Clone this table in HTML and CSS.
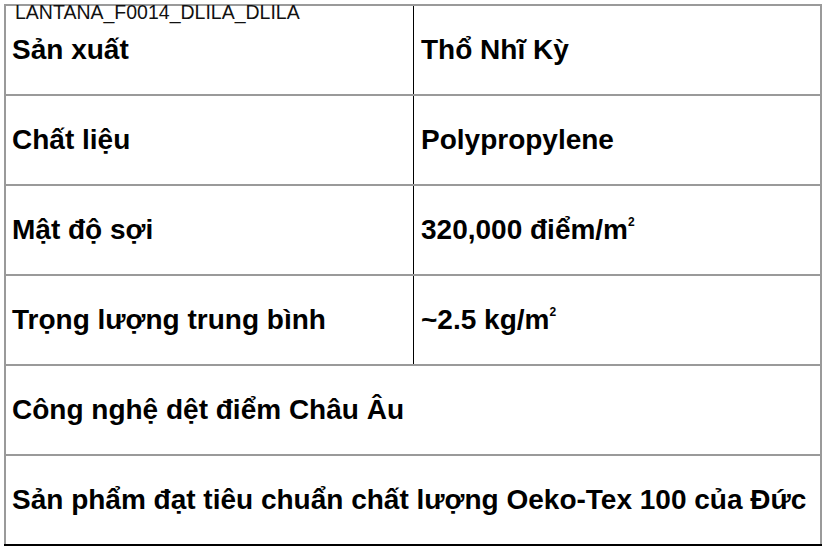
FILE: index.html
```html
<!DOCTYPE html>
<html lang="vi">
<head>
<meta charset="utf-8">
<link rel="stylesheet" href="styles.css">
</head>
<body>
<div class="wrap">
  <div class="caption">LANTANA_F0014_DLILA_DLILA</div>
  <table class="spec">
    <tr><td class="k">Sản xuất</td><td class="v">Thổ Nhĩ Kỳ</td></tr>
    <tr><td class="k">Chất liệu</td><td class="v">Polypropylene</td></tr>
    <tr><td class="k">Mật độ sợi</td><td class="v">320,000 điểm/m<sup>2</sup></td></tr>
    <tr><td class="k">Trọng lượng trung bình</td><td class="v">~2.5 kg/m<sup>2</sup></td></tr>
    <tr><td class="full" colspan="2">Công nghệ dệt điểm Châu Âu</td></tr>
    <tr class="last"><td class="full" colspan="2">Sản phẩm đạt tiêu chuẩn chất lượng Oeko-Tex 100 của Đức</td></tr>
  </table>
</div>
</body>
</html>
```
FILE: styles.css
```css
html, body {
  margin: 0;
  padding: 0;
  background: #fff;
}
body {
  font-family: "Liberation Sans", Arial, sans-serif;
  color: #000;
}
.wrap {
  position: relative;
  padding: 4px 4px 0 4px;
}
.caption {
  position: absolute;
  left: 15px;
  top: 2px;
  font-size: 19.5px;
  line-height: 20px;
  color: #111;
}
.spec {
  width: 818px;
  border-collapse: collapse;
  table-layout: fixed;
}
.spec td {
  height: 88px;
  padding: 0 7px 0 7px;
  border-top: 2px solid #9a9a9a;
  font-size: 28px;
  font-weight: bold;
  vertical-align: middle;
  white-space: nowrap;
}
.spec td.k {
  width: 394px;
  padding-left: 6px;
  border-left: 2px solid #9a9a9a;
  border-right: 1px solid #000;
}
.spec td.v {
  border-right: 2px solid #9a9a9a;
}
.spec td.full {
  padding-left: 6px;
  border-left: 2px solid #9a9a9a;
  border-right: 2px solid #9a9a9a;
}
.spec tr.last td {
  border-bottom: 2px solid #000;
}
sup {
  font-size: 12px;
  vertical-align: 13px;
  line-height: 0;
}
```
